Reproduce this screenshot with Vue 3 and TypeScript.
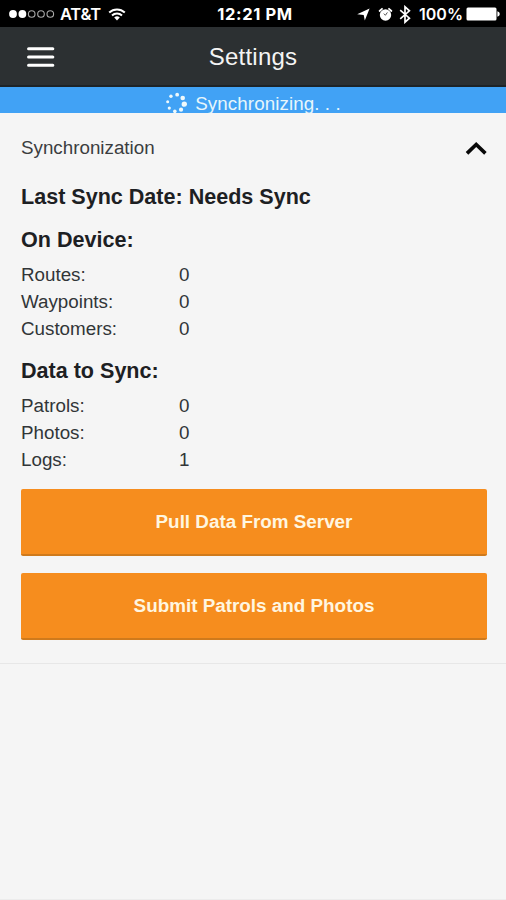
<script setup lang="ts">
interface Stat {
  label: string
  value: number
}

interface StatGroup {
  title: string
  stats: Stat[]
}

const groups: StatGroup[] = [
  {
    title: 'On Device:',
    stats: [
      { label: 'Routes:', value: 0 },
      { label: 'Waypoints:', value: 0 },
      { label: 'Customers:', value: 0 },
    ],
  },
  {
    title: 'Data to Sync:',
    stats: [
      { label: 'Patrols:', value: 0 },
      { label: 'Photos:', value: 0 },
      { label: 'Logs:', value: 1 },
    ],
  },
]

const actions: string[] = ['Pull Data From Server', 'Submit Patrols and Photos']

// Spinner dots, clockwise from the top; the leading dots are larger.
const radii: number[] = [1.9, 2.3, 2.7, 2.1, 1.8, 1.6, 1.5, 1.7]
const dots = radii.map((r, i) => {
  const angle = ((i * 45 - 82) * Math.PI) / 180
  return { r, cx: 11 + 8.4 * Math.cos(angle), cy: 11 + 8.4 * Math.sin(angle) }
})
</script>

<template>
  <div class="screen">
    <div class="status">
      <div class="status-side">
        <svg class="signal" width="48" height="10" viewBox="0 0 48 10">
          <circle cx="5" cy="5" r="3.9" fill="#fff" />
          <circle cx="14.4" cy="5" r="3.9" fill="#fff" />
          <g fill="none" stroke="#aaa" stroke-width="1.1">
            <circle cx="23.7" cy="5" r="3.3" />
            <circle cx="33" cy="5" r="3.3" />
            <circle cx="42.3" cy="5" r="3.3" />
          </g>
        </svg>
        <span class="carrier">AT&amp;T</span>
        <svg class="wifi" width="18" height="13" viewBox="0 0 18 13">
          <g fill="none" stroke="#fff" stroke-width="2">
            <path d="M1.2 4.6A11.4 11.4 0 0 1 16.8 4.6" />
            <path d="M4 7.6A7.3 7.3 0 0 1 14 7.6" />
          </g>
          <path d="M6.2 9.6A4.1 4.1 0 0 1 11.8 9.6L9 12.6Z" fill="#fff" />
        </svg>
      </div>
      <span class="time">12:21 PM</span>
      <div class="status-side right">
        <svg width="13" height="13" viewBox="0 0 13 13">
          <path d="M12.6.6 7.8 12.6 6.7 6.9.2 6.2Z" fill="#fff" />
        </svg>
        <svg class="alarm" width="15" height="15" viewBox="0 0 15 15">
          <circle cx="7.5" cy="8" r="5.7" fill="#fff" />
          <path d="M1.6 4 4 1.8M13.4 4 11 1.8" stroke="#fff" stroke-width="1.8" stroke-linecap="round" />
          <path d="M5.8 6.6 7.4 8.3 9.4 5.4" fill="none" stroke="#555" stroke-width="1" />
        </svg>
        <svg class="bluetooth" width="12" height="19" viewBox="0 0 12 19">
          <path d="M1.2 5.2 10.4 13.2 6 17.2V1.8L10.4 5.8 1.2 13.8" fill="none" stroke="#fff" stroke-width="1.7" />
        </svg>
        <span class="percent">100%</span>
        <svg class="battery" width="34" height="14" viewBox="0 0 34 14">
          <rect x=".5" y=".5" width="30" height="13" rx="1.5" fill="#fff" />
          <path d="M31.4 4.3Q33.8 5 33.8 7T31.4 9.7Z" fill="#fff" />
        </svg>
      </div>
    </div>

    <header class="navbar">
      <button class="menu" aria-label="Menu">
        <svg width="30" height="24" viewBox="0 0 30 24">
          <path d="M2.6 3.8H26.8M2.6 12H26.8M2.6 20.2H26.8" stroke="#fff" stroke-width="3.1" stroke-linecap="round" />
        </svg>
      </button>
      <h1>Settings</h1>
    </header>

    <div class="sync-bar">
      <svg class="spinner" width="22" height="22" viewBox="0 0 22 22">
        <circle v-for="(d, i) in dots" :key="i" :cx="d.cx" :cy="d.cy" :r="d.r" fill="#eff9fb" />
      </svg>
      <span>Synchronizing. . .</span>
    </div>

    <main class="panel">
      <div class="panel-head">
        <span>Synchronization</span>
        <svg width="22" height="16" viewBox="0 0 22 16">
          <path d="M2 13.4 11.2 4.4 20.4 13.4" fill="none" stroke="#080808" stroke-width="3.6" />
        </svg>
      </div>

      <h2 class="last-sync">Last Sync Date: Needs Sync</h2>

      <section v-for="group in groups" :key="group.title" class="group">
        <h2>{{ group.title }}</h2>
        <dl>
          <div v-for="stat in group.stats" :key="stat.label" class="row">
            <dt>{{ stat.label }}</dt>
            <dd>{{ stat.value }}</dd>
          </div>
        </dl>
      </section>

      <div class="actions">
        <button v-for="action in actions" :key="action" class="action">{{ action }}</button>
      </div>
    </main>
    <div class="rest"></div>
  </div>
</template>

<style>
body {
  background: #f5f5f5;
}
</style>

<style scoped>
.screen {
  display: flex;
  flex-direction: column;
  width: 506px;
  height: 900px;
  overflow: hidden;
  background: #f5f5f5;
  color: #1d2023;
  font-family: "Liberation Sans", Arial, sans-serif;
  font-size: 18.8px;
}

svg {
  display: block;
  flex: none;
}

h1,
h2,
dl,
dd {
  margin: 0;
}

button {
  border: 0;
  padding: 0;
  font-family: inherit;
}

.status {
  display: grid;
  grid-template-columns: 1fr auto 1fr;
  align-items: center;
  height: 27px;
  padding: 1px 6px 0 8px;
  box-sizing: border-box;
  background: #000;
  color: #fff;
  font-family: Inter, sans-serif;
  font-size: 16.5px;
  line-height: 26px;
}

.status-side {
  display: flex;
  align-items: center;
}

.right {
  justify-content: flex-end;
}

.carrier {
  margin-left: 4px;
  font-weight: 600;
  letter-spacing: -0.2px;
}

.wifi {
  margin-left: 7px;
}

.time {
  padding-left: 2px;
  font-weight: 700;
  letter-spacing: 0.6px;
}

.alarm {
  margin-left: 8px;
}

.bluetooth {
  margin-left: 6px;
}

.percent {
  margin-left: 8px;
  font-size: 16px;
  font-weight: 600;
}

.battery {
  margin-left: 3px;
}

.navbar {
  display: grid;
  grid-template-columns: 60px 1fr 60px;
  align-items: center;
  height: 60px;
  box-sizing: border-box;
  border-bottom: 2px solid #1d2327;
  background: #2c3032;
  color: #f4f4f4;
}

.menu {
  padding: 2px 0 0 26px;
  background: none;
}

h1 {
  padding-top: 1px;
  font-size: 24px;
  font-weight: 400;
  line-height: 57px;
  letter-spacing: 0.25px;
  text-align: center;
}

.sync-bar {
  display: flex;
  justify-content: center;
  align-items: center;
  gap: 8px;
  height: 26px;
  overflow: hidden;
  background: #41a2f5;
  color: #e6f6fb;
  line-height: 26px;
}

.sync-bar span {
  padding-top: 7px;
  letter-spacing: 0.08px;
}

.spinner {
  margin-top: 6px;
}

.panel {
  padding: 18px 19px 23px 21px;
  border-bottom: 1px solid #e7e7e7;
}

.panel-head {
  display: flex;
  justify-content: space-between;
  align-items: center;
  height: 34px;
  color: #3b3d3f;
}

h2 {
  font-size: 21.55px;
  font-weight: 700;
  line-height: 26px;
}

.last-sync {
  margin-top: 19px;
}

.group {
  margin-top: 17px;
}

.group + .group {
  margin-top: 16px;
}

dl {
  margin-top: 8px;
}

.row {
  display: grid;
  grid-template-columns: 158px 1fr;
  line-height: 27px;
  color: #313538;
}

.actions {
  display: grid;
  gap: 17px;
  margin-top: 16px;
}

.action {
  height: 67px;
  padding-top: 1px;
  border-bottom: 2px solid #cf7a1c;
  border-radius: 2px;
  background: #f68d1e;
  color: #fff6e0;
  font-size: 18.85px;
  font-weight: 700;
}

.rest {
  flex: 1;
  border-bottom: 1px solid #ececec;
}
</style>
